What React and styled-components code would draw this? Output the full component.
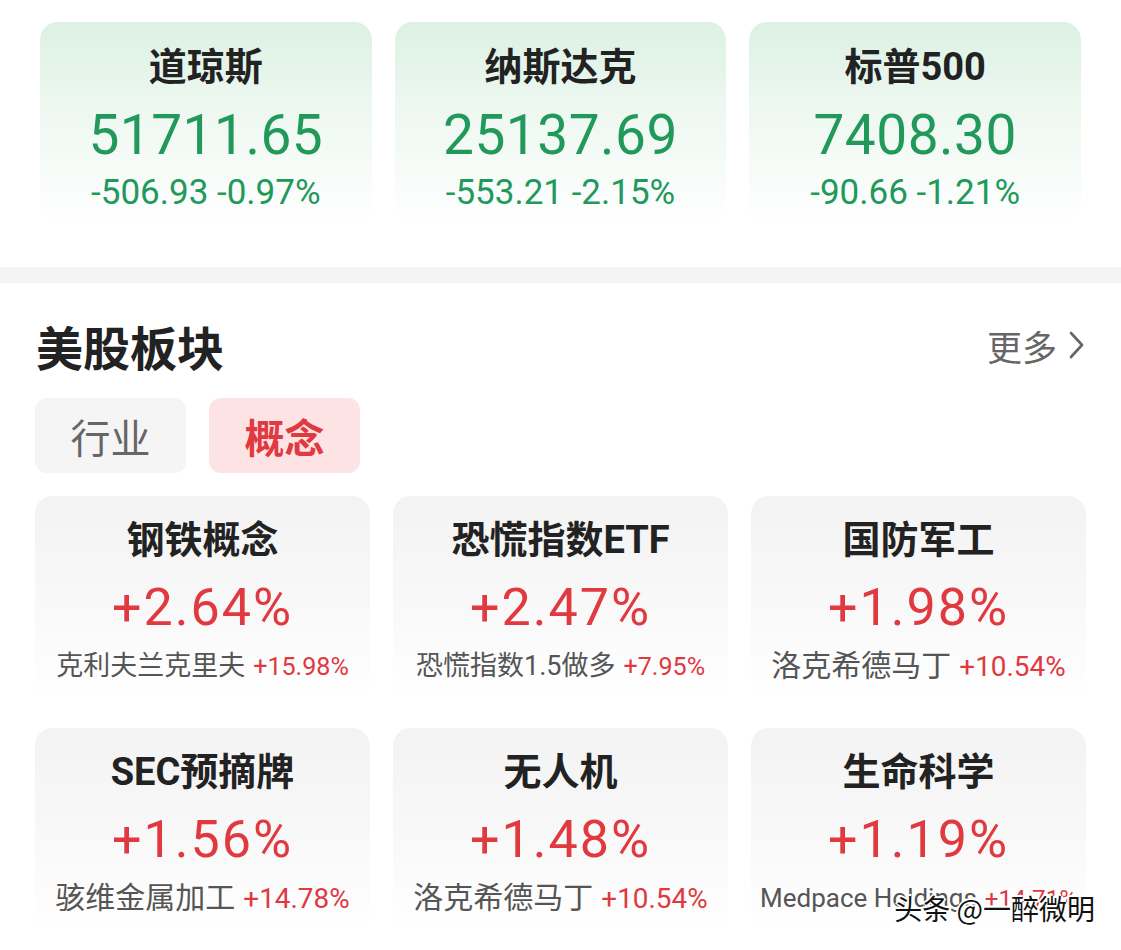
import React from 'react'
import styled, { createGlobalStyle } from 'styled-components'

const GlobalStyle = createGlobalStyle`
  body {
    margin: 0;
    background: #fff;
    font-family: Roboto, "Noto Sans CJK SC", sans-serif;
  }
`

const indices = [
  { name: '道琼斯', price: '51711.65', change: '-506.93 -0.97%' },
  { name: '纳斯达克', price: '25137.69', change: '-553.21 -2.15%' },
  { name: '标普500', price: '7408.30', change: '-90.66 -1.21%' },
]

// leadSize: the lead line shrinks when the stock name is long
const sectors = [
  { name: '钢铁概念', pct: '+2.64%', lead: '克利夫兰克里夫', leadPct: '+15.98%', leadSize: 27 },
  { name: '恐慌指数ETF', pct: '+2.47%', lead: '恐慌指数1.5做多', leadPct: '+7.95%', leadSize: 27 },
  { name: '国防军工', pct: '+1.98%', lead: '洛克希德马丁', leadPct: '+10.54%', leadSize: 30 },
  { name: 'SEC预摘牌', pct: '+1.56%', lead: '骇维金属加工', leadPct: '+14.78%', leadSize: 30 },
  { name: '无人机', pct: '+1.48%', lead: '洛克希德马丁', leadPct: '+10.54%', leadSize: 30 },
  { name: '生命科学', pct: '+1.19%', lead: 'Medpace Holdings', leadPct: '+14.71%', leadSize: 26 },
]

const Page = styled.div`
  position: relative;
  width: 1121px;
  height: 950px;
  overflow: hidden;
  padding-top: 22px;
  box-sizing: border-box;
`

const IndexRow = styled.div`
  display: grid;
  grid-template-columns: repeat(3, 1fr);
  gap: 23px;
  padding: 0 40px;
`

const IndexCard = styled.div`
  height: 203px;
  border-radius: 18px;
  background: linear-gradient(180deg, #dcf1e3 0%, #eef8f1 45%, #ffffff 100%);
  text-align: center;
  padding-top: 21px;
  box-sizing: border-box;
`

const CardTitle = styled.div`
  font-family: Roboto, "Noto Sans CJK SC", sans-serif;
  font-size: 38px;
  font-weight: 700;
  line-height: 48px;
  color: #222;
`

const Price = styled.div`
  margin-top: 14px;
  font-size: 55px;
  line-height: 60px;
  color: #21995a;
  letter-spacing: 0.5px;
`

const Change = styled.div`
  margin-top: 6px;
  font-size: 35px;
  line-height: 44px;
  color: #21995a;
`

const Divider = styled.div`
  height: 16px;
  background: #f2f3f5;
  margin-top: 42px;
`

const Header = styled.div`
  display: flex;
  align-items: center;
  justify-content: space-between;
  padding: 0 36px;
  margin-top: 40px;
  height: 44px;
`

const Heading = styled.h2`
  margin: 0;
  font-family: "Noto Sans CJK SC", sans-serif;
  font-size: 47px;
  font-weight: 700;
  color: #222;
`

const More = styled.div`
  display: flex;
  align-items: center;
  gap: 12px;
  font-family: "Noto Sans CJK SC", sans-serif;
  font-size: 35px;
  color: #666;
`

const Tabs = styled.div`
  display: flex;
  gap: 23px;
  padding: 0 35px;
  margin-top: 31px;
`

const Tab = styled.div`
  width: 151px;
  height: 75px;
  border-radius: 12px;
  display: flex;
  align-items: center;
  justify-content: center;
  font-family: "Noto Sans CJK SC", sans-serif;
  font-size: 40px;
  font-weight: ${p => (p.$active ? 700 : 400)};
  color: ${p => (p.$active ? '#e0393f' : '#666')};
  background: ${p => (p.$active ? '#fde3e3' : '#f5f5f5')};
`

const Grid = styled.div`
  display: grid;
  grid-template-columns: repeat(3, 1fr);
  column-gap: 23px;
  row-gap: 27px;
  padding: 0 35px;
  margin-top: 23px;
`

const SectorCard = styled.div`
  height: 205px;
  border-radius: 18px;
  background: linear-gradient(180deg, #f3f3f3 0%, #f8f8f8 50%, #ffffff 100%);
  text-align: center;
  padding-top: 20px;
  box-sizing: border-box;
  overflow: hidden;
`

const Pct = styled.div`
  margin-top: 14px;
  font-size: 52px;
  line-height: 60px;
  color: #e0393f;
  letter-spacing: 2px;
`

const Lead = styled.div`
  margin-top: 6px;
  line-height: 44px;
  white-space: nowrap;
  font-size: ${p => p.$size}px;
  color: #555;
  font-family: Roboto, "Noto Sans CJK SC", sans-serif;

  span {
    margin-left: 8px;
    font-size: 0.93em;
    color: #e0393f;
  }
`

const Watermark = styled.div`
  position: absolute;
  right: 26px;
  bottom: 22px;
  font-family: "Noto Sans CJK SC", sans-serif;
  font-size: 28px;
  color: #111;
  text-shadow: -2px 0 #fff, 2px 0 #fff, 0 -2px #fff, 0 2px #fff, 1px 1px #fff, -1px -1px #fff;
`

const Chevron = () => (
  <svg width="16" height="28" viewBox="0 0 16 28" fill="none">
    <path d="M2 2 L13 14 L2 26" stroke="#666" strokeWidth="2.6" strokeLinecap="round" strokeLinejoin="round" />
  </svg>
)

export default function App() {
  return (
    <Page>
      <GlobalStyle />
      <IndexRow>
        {indices.map(item => (
          <IndexCard key={item.name}>
            <CardTitle>{item.name}</CardTitle>
            <Price>{item.price}</Price>
            <Change>{item.change}</Change>
          </IndexCard>
        ))}
      </IndexRow>

      <Divider />

      <Header>
        <Heading>美股板块</Heading>
        <More>
          更多
          <Chevron />
        </More>
      </Header>

      <Tabs>
        <Tab>行业</Tab>
        <Tab $active>概念</Tab>
      </Tabs>

      <Grid>
        {sectors.map(s => (
          <SectorCard key={s.name}>
            <CardTitle>{s.name}</CardTitle>
            <Pct>{s.pct}</Pct>
            <Lead $size={s.leadSize}>
              {s.lead}
              <span>{s.leadPct}</span>
            </Lead>
          </SectorCard>
        ))}
      </Grid>

      <Watermark>头条 @一醉微明</Watermark>
    </Page>
  )
}
